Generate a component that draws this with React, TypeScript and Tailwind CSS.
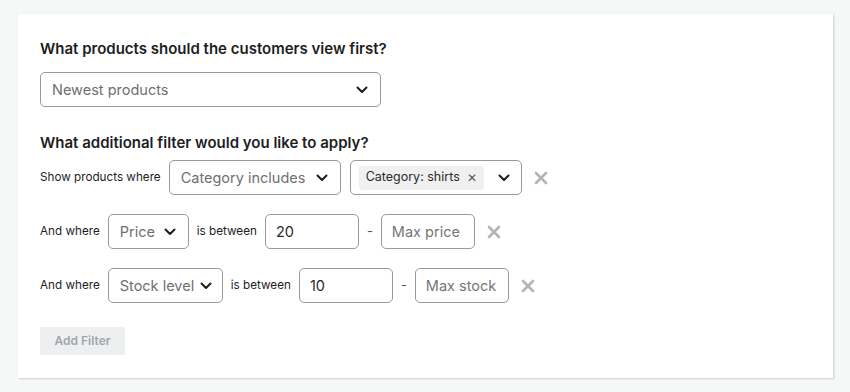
import { ReactNode } from "react"

const font = { fontFamily: "Inter, 'Noto Sans', sans-serif" }

function Chevron() {
  return (
    <svg width="12" height="8" viewBox="0 0 12 8" fill="none" className="shrink-0">
      <path d="M1.5 1.5 6 6l4.5-4.5" stroke="#1e1e1e" strokeWidth="2" strokeLinecap="round" strokeLinejoin="round" />
    </svg>
  )
}

function Remove() {
  return (
    <button className="ml-[1px] flex h-[20px] w-[20px] items-center justify-center">
      <svg width="14" height="14" viewBox="0 0 14 14" fill="none">
        <path d="M2 2l10 10M12 2 2 12" stroke="#b4b4b4" strokeWidth="2.6" strokeLinecap="round" />
      </svg>
    </button>
  )
}

function Select({ width, children }: { width: string; children: ReactNode }) {
  return (
    <div className={`flex h-[35px] ${width} shrink-0 items-center justify-between rounded-[5px] border border-[#9a9a9a] bg-white pl-[11px] pr-[12px]`}>
      <span className="whitespace-nowrap text-[14.5px] text-[#6f6f6f]">{children}</span>
      <Chevron />
    </div>
  )
}

function Input({ value, placeholder }: { value?: string; placeholder?: string }) {
  return (
    <div className="flex h-[35px] w-[94px] shrink-0 items-center rounded-[5px] border border-[#9a9a9a] bg-white px-[10px]">
      {value ? (
        <span className="text-[14.5px] text-[#2a2a2a]">{value}</span>
      ) : (
        <span className="whitespace-nowrap text-[14.5px] text-[#767676]">{placeholder}</span>
      )}
    </div>
  )
}

function Label({ children }: { children: ReactNode }) {
  return <span className="shrink-0 whitespace-nowrap text-[11.7px] text-[#1e1e1e]">{children}</span>
}

export default function App() {
  return (
    <div className="min-h-[392px] bg-[#f6f7f7] pt-[14px] pl-[18px]" style={font}>
      <div className="h-[364px] w-[815px] bg-white px-[22px] pt-[25px] shadow-[1px_1px_2px_rgba(0,0,0,0.18)]">
        <h2 className="text-[15px] font-semibold leading-[20px] text-[#1e1e1e]">
          What products should the customers view first?
        </h2>
        <div className="mt-[13px]">
          <Select width="w-[341px]">Newest products</Select>
        </div>

        <h2 className="mt-[26px] text-[15px] font-semibold leading-[20px] text-[#1e1e1e]">
          What additional filter would you like to apply?
        </h2>

        <div className="mt-[7px] flex flex-col gap-[19px]">
          <div className="flex h-[35px] items-center gap-[8px]">
            <Label>Show products where</Label>
            <Select width="w-[172px]">Category includes</Select>
            <div className="ml-[1px] flex h-[35px] w-[172px] shrink-0 items-center justify-between rounded-[5px] border border-[#9a9a9a] bg-white pl-[8px] pr-[11px]">
              <span className="flex h-[24px] w-[125px] items-center gap-[7px] whitespace-nowrap rounded-[4px] bg-[#f0f0f0] px-[7px] text-[12.5px] text-[#2a2a2a]">
                Category: shirts
                <span className="text-[12px] text-[#555]">✕</span>
              </span>
              <Chevron />
            </div>
            <Remove />
          </div>

          <div className="flex h-[35px] items-center gap-[8px]">
            <Label>And where</Label>
            <Select width="w-[81px]">Price</Select>
            <Label>is between</Label>
            <Input value="20" />
            <span className="text-[13px] text-[#555]">-</span>
            <Input placeholder="Max price" />
            <Remove />
          </div>

          <div className="flex h-[35px] items-center gap-[8px]">
            <Label>And where</Label>
            <div className="flex h-[35px] w-[115px] shrink-0 items-center justify-between rounded-[5px] border border-[#9a9a9a] bg-white pl-[11px] pr-[10px]">
              <span className="whitespace-nowrap text-[14.5px] text-[#6f6f6f]">Stock level</span>
              <Chevron />
            </div>
            <Label>is between</Label>
            <Input value="10" />
            <span className="text-[13px] text-[#555]">-</span>
            <Input placeholder="Max stock" />
            <Remove />
          </div>
        </div>

        <button className="mt-[24px] flex h-[28px] w-[85px] items-center justify-center rounded-[2px] bg-[#edeff0] text-[12px] font-semibold text-[#a2a6aa]">
          Add Filter
        </button>
      </div>
    </div>
  )
}
